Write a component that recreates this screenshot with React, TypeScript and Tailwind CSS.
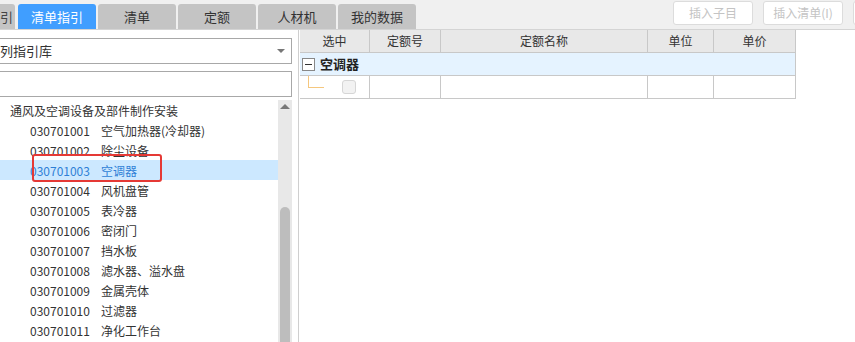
import React from 'react';

const font = { fontFamily: '"Microsoft YaHei", "Noto Sans CJK SC", "Noto Sans", sans-serif' };

const rows = [
  ['030701001', '空气加热器(冷却器)'],
  ['030701002', '除尘设备'],
  ['030701003', '空调器'],
  ['030701004', '风机盘管'],
  ['030701005', '表冷器'],
  ['030701006', '密闭门'],
  ['030701007', '挡水板'],
  ['030701008', '滤水器、溢水盘'],
  ['030701009', '金属壳体'],
  ['030701010', '过滤器'],
  ['030701011', '净化工作台'],
];

const tabs = ['清单', '定额', '人材机', '我的数据'];

export default function App() {
  return (
    <div className="w-[855px] h-[342px] overflow-hidden bg-white text-[12px] text-[#333]" style={font}>
      {/* top bar */}
      <div className="h-[30px] bg-[#f0f0f0] border-b border-[#d4d4d4] flex items-end relative">
        <div className="w-[15px] h-[25px] bg-[#c4c4c4] rounded-tr-[3px] flex items-center justify-end pr-[2px] text-[13px] text-[#444]">引</div>
        <div className="ml-[3px] w-[78px] h-[25px] bg-[#409eff] rounded-t-[3px] flex items-center justify-center text-[13px] text-white">清单指引</div>
        {tabs.map(t => (
          <div key={t} className="ml-[2px] w-[78px] h-[25px] bg-[#c4c4c4] rounded-t-[3px] flex items-center justify-center text-[13px] text-[#333]">{t}</div>
        ))}
        <div className="absolute top-[1px] left-[673px] flex gap-[10px]">
          <div className="w-[80px] h-[24px] bg-white border border-[#dcdcdc] rounded-[3px] flex items-center justify-center text-[#c4c4c4]">插入子目</div>
          <div className="w-[80px] h-[24px] bg-white border border-[#dcdcdc] rounded-[3px] flex items-center justify-center text-[#c4c4c4]">插入清单(I)</div>
          <div className="w-[20px] h-[24px] bg-white border border-[#dcdcdc] rounded-[3px]" />
        </div>
      </div>

      <div className="flex h-[312px]">
        {/* left panel */}
        <div className="w-[298px] flex flex-col pt-[8px]">
          <div className="w-[292px] h-[26px] border border-[#a8a8a8] border-l-0 flex items-center justify-between pr-[6px]">
            <span className="text-[13px] text-[#333]">列指引库</span>
            <span className="w-0 h-0 border-l-[4px] border-r-[4px] border-t-[4px] border-l-transparent border-r-transparent border-t-[#777]" />
          </div>
          <div className="mt-[7px] w-[292px] h-[26px] border border-[#a8a8a8] border-l-0" />
          <div className="mt-[3px] flex flex-1 overflow-hidden">
            <div className="w-[278px] flex flex-col">
              <div className="h-[20px] shrink-0 flex items-center pt-[2px] pl-[10px] text-[#333]">通风及空调设备及部件制作安装</div>
              {rows.map(([code, name]) => {
                const sel = code === '030701003';
                return (
                  <div key={code} className={`h-[20px] shrink-0 flex items-center pt-[2px] pl-[30px] relative ${sel ? 'bg-[#cce8ff] text-[#2f7fd6]' : 'text-[#333]'}`}>
                    <span className="w-[71px]">{code}</span>
                    <span>{name}</span>
                    {sel && (
                      <div className="absolute left-[32px] top-[-6px] w-[130px] h-[28px] border-2 border-[#e53935] rounded-[3px]" />
                    )}
                  </div>
                );
              })}
            </div>
            <div className="w-[14px] bg-[#e8e8e8] flex flex-col items-center">
              <span className="mt-[4px] w-0 h-0 border-l-[5px] border-r-[5px] border-b-[5px] border-l-transparent border-r-transparent border-b-[#777]" />
              <div className="mt-[98px] w-[10px] flex-1 bg-[#bdbdbd] rounded-t-[5px]" />
            </div>
          </div>
        </div>

        {/* right panel */}
        <div className="flex-1 border-l border-[#cfcfcf] pl-[1px]">
          <div className="w-[496px] border-r border-b border-[#c8c8c8]">
            <div className="flex h-[23px] bg-[#e8e8e8] border-b border-[#c8c8c8] text-[#333]">
              <div className="w-[70px] border-r border-[#c8c8c8] flex items-center justify-center">选中</div>
              <div className="w-[71px] border-r border-[#c8c8c8] flex items-center justify-center">定额号</div>
              <div className="w-[207px] border-r border-[#c8c8c8] flex items-center justify-center">定额名称</div>
              <div className="w-[66px] border-r border-[#c8c8c8] flex items-center justify-center">单位</div>
              <div className="flex-1 flex items-center justify-center">单价</div>
            </div>
            <div className="h-[23px] bg-[#e5f3ff] border-b border-[#c8c8c8] flex items-center pl-[2px]">
              <div className="w-[13px] h-[13px] border border-[#888] bg-white flex items-center justify-center">
                <div className="w-[7px] h-[1px] bg-[#333]" />
              </div>
              <span className="ml-[5px] font-bold text-[13px] text-[#222]">空调器</span>
            </div>
            <div className="flex h-[22px]">
              <div className="w-[70px] border-r border-[#c8c8c8] relative">
                <div className="absolute left-[8px] top-0 w-[16px] h-[12px] border-l border-b border-[#f5c77e]" />
                <div className="absolute left-[42px] top-[4px] w-[14px] h-[14px] rounded-[3px] border border-[#d6d6d6] bg-[#f2f2f2]" />
              </div>
              <div className="w-[71px] border-r border-[#c8c8c8]" />
              <div className="w-[207px] border-r border-[#c8c8c8]" />
              <div className="w-[66px] border-r border-[#c8c8c8]" />
              <div className="flex-1" />
            </div>
          </div>
        </div>
      </div>
    </div>
  );
}
